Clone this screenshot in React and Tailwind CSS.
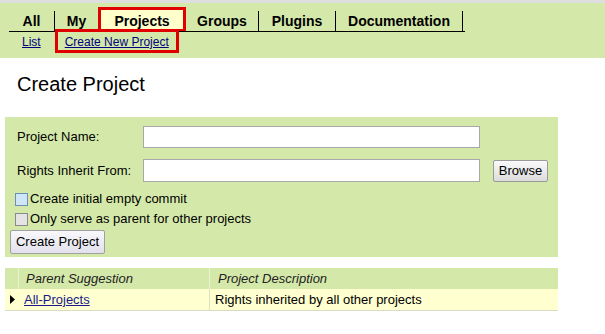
const tabs = [
  { label: 'All', w: 'w-[46px]', sep: true },
  { label: 'My', w: 'w-[43px]', sep: false },
  { label: 'Projects', w: 'w-[88px]', active: true },
  { label: 'Groups', w: 'w-[73px]', sep: true },
  { label: 'Plugins', w: 'w-[77px]', sep: true },
  { label: 'Documentation', w: 'w-[127px]', sep: true },
];

const Checkbox = ({ hover }) => (
  <span
    className={
      'inline-block w-[13px] h-[13px] border ' +
      (hover ? 'border-[#6a8fb8] bg-[#cfe6f7]' : 'border-[#8a8a8a] bg-[#e4e4e4]')
    }
  />
);

const App = () => {
  return (
    <div className="w-[605px] h-[334px] bg-white font-['Liberation_Sans',Arial,sans-serif] text-[13px] text-black overflow-hidden">
      <div className="h-[3px] bg-[#dedede]" />
      <div className="bg-[#d4e9a9] h-[55px] pt-[5px] pl-[9px]">
        {/* tab bar */}
        <div className="flex items-end h-[24px] w-[456px] border-b border-black">
          {tabs.map((t) =>
            t.active ? (
              <div
                key={t.label}
                className={'h-[24px] flex items-end justify-center font-bold text-[14px] leading-[16px] bg-[#ffffcc] border-[3px] border-b-[2px] border-[#e00000] ' + t.w}
              >
                {t.label}
              </div>
            ) : (
              <div
                key={t.label}
                className={
                  'h-[20px] flex items-end justify-center font-bold text-[14px] leading-[16px] pb-[2px] ' +
                  t.w +
                  (t.sep ? ' border-r border-black' : '')
                }
              >
                {t.label}
              </div>
            )
          )}
        </div>
        {/* sub menu */}
        <div className="flex items-center text-[12px] h-[24px] -mt-[3px]">
          <a href="#" className="ml-[13px] mt-[2px] underline text-[#00007f]">List</a>
          <div className="ml-[14px] h-[24px] px-[7px] pt-[2px] flex items-center border-[3px] border-[#e00000]">
            <a href="#" className="underline text-[#00007f]">Create New Project</a>
          </div>
        </div>
      </div>

      <h1 className="text-[20px] leading-none mt-[16px] ml-[17px]">Create Project</h1>

      <div className="ml-[5px] mt-[23px] w-[553px] h-[140px] bg-[#d4e9a9] pt-[9px] pl-[5px]">
        <div className="flex items-center h-[22px]">
          <span className="w-[133px] pl-[7px]">Project Name:</span>
          <input className="w-[337px] h-[22px] bg-white border border-[#a8a8a8] outline-none" />
        </div>
        <div className="flex items-center h-[23px] mt-[11px]">
          <span className="w-[133px] pl-[7px]">Rights Inherit From:</span>
          <input className="w-[337px] h-[23px] bg-white border border-[#a8a8a8] outline-none" />
          <button className="ml-[13px] w-[55px] h-[22px] border border-[#9a9a9a] rounded-[2px] bg-gradient-to-b from-[#fafafa] to-[#dcdcdc] text-[13px]">
            Browse
          </button>
        </div>
        <div className="flex items-center gap-[2px] mt-[9px] h-[16px] pl-[5px]">
          <Checkbox hover />
          <span>Create initial empty commit</span>
        </div>
        <div className="flex items-center gap-[2px] mt-[4px] h-[16px] pl-[5px]">
          <Checkbox />
          <span>Only serve as parent for other projects</span>
        </div>
        <button className="mt-[3px] w-[95px] h-[24px] border border-[#a0a0a0] rounded-[2px] bg-gradient-to-b from-[#f8f8fc] to-[#e2e0ec] text-[13px]">
          Create Project
        </button>
      </div>

      <div className="ml-[5px] mt-[11px] w-[553px]">
        <div className="flex h-[21px] bg-[#d4e9a9] italic text-[#222]">
          <div className="w-[14px] border-r border-[#e8f3d2]" />
          <div className="w-[191px] pl-[7px] flex items-center border-r border-[#e8f3d2]">Parent Suggestion</div>
          <div className="flex-1 pl-[8px] flex items-center">Project Description</div>
        </div>
        <div className="flex h-[22px] bg-[#ffffd0] border-b border-[#d8dcc0]">
          <div className="w-[14px] flex items-center pl-[5px]">
            <svg width="5" height="9" viewBox="0 0 5 9">
              <path d="M0 0 L5 4.5 L0 9 Z" fill="#000" />
            </svg>
          </div>
          <div className="w-[191px] pl-[5px] flex items-center border-r border-[#e0e0c0]">
            <a href="#" className="underline text-[#1a1a8a]">All-Projects</a>
          </div>
          <div className="flex-1 pl-[5px] flex items-center">Rights inherited by all other projects</div>
        </div>
      </div>
    </div>
  );
};

export default App;
